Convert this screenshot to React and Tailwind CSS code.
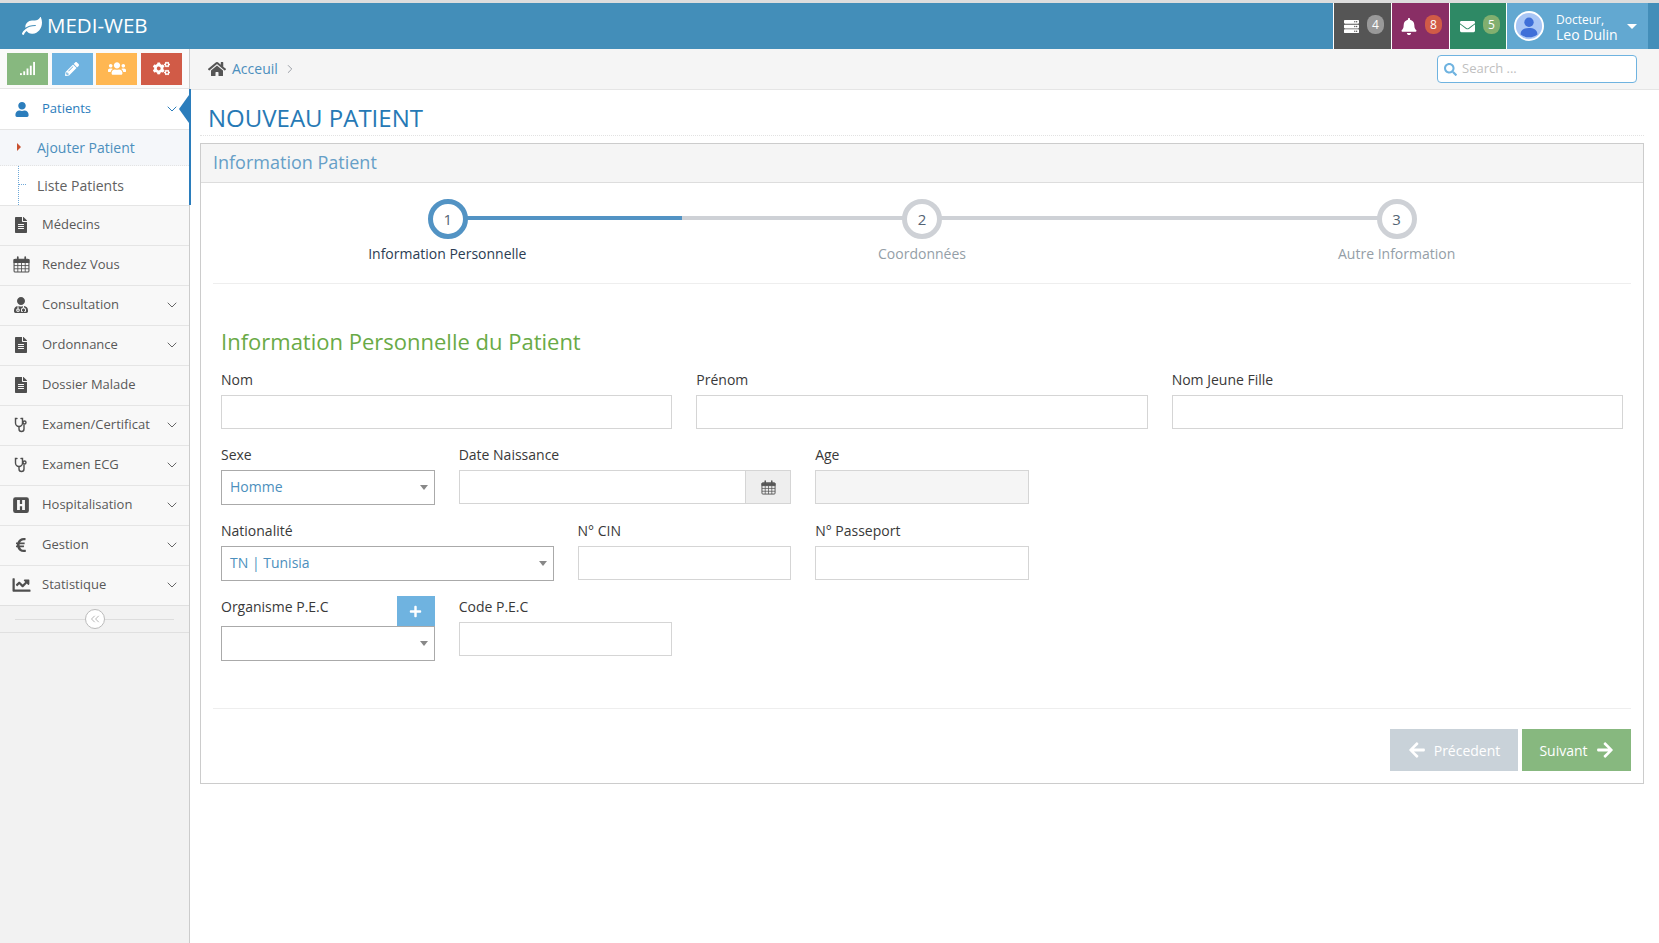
import { ChevronDown, ChevronRight, ChevronsLeft } from "lucide-react"
import {
  FaArrowLeft,
  FaArrowRight,
  FaBell,
  FaChartLine,
  FaCogs,
  FaEnvelope,
  FaEuroSign,
  FaFileAlt,
  FaHome,
  FaLeaf,
  FaPencilAlt,
  FaPlus,
  FaSearch,
  FaServer,
  FaUser,
  FaUserMd,
  FaUsers,
} from "react-icons/fa"

function CalendarIcon({ className }) {
  return (
    <svg viewBox="0 0 16 16" className={className} fill="none" stroke="currentColor">
      <rect x="1" y="3" width="14" height="12" rx="1" strokeWidth="1" />
      <path d="M1 3.5h14V6H1z" fill="currentColor" strokeWidth="1" />
      <path d="M1 9h14M1 12h14M4.5 6v9M8 6v9M11.5 6v9" strokeWidth="0.8" />
      <path d="M4.5 1v3M11.5 1v3" strokeWidth="1.6" strokeLinecap="round" />
    </svg>
  )
}

function HospitalIcon({ className }) {
  return (
    <svg viewBox="0 0 16 16" className={className}>
      <path
        fill="currentColor"
        fillRule="evenodd"
        d="M3 1h10a2 2 0 0 1 2 2v10a2 2 0 0 1-2 2H3a2 2 0 0 1-2-2V3a2 2 0 0 1 2-2zm1.500 2.500v9H7V9h2v3.500h2.500v-9H9V7H7V3.500z"
      />
    </svg>
  )
}

function StethoscopeIcon({ className }) {
  return (
    <svg viewBox="0 0 16 16" className={className} fill="none" stroke="currentColor" strokeWidth="1.4">
      <path d="M4 1.500H2.500V6a3.500 3.500 0 0 0 7 0V1.500H8" strokeLinecap="round" />
      <path d="M6 9.500V12a2.500 2.500 0 0 0 5 0V7.500" />
      <circle cx="11.500" cy="5.500" r="1.500" />
    </svg>
  )
}

function SignalIcon({ className }) {
  return (
    <svg viewBox="0 0 16 16" className={className} fill="currentColor">
      <rect x="0" y="13" width="2" height="2" />
      <rect x="3.500" y="11" width="2" height="4" />
      <rect x="7" y="8" width="2" height="7" />
      <rect x="10.500" y="5" width="2" height="10" />
      <rect x="14" y="1" width="2" height="14" />
    </svg>
  )
}

function Avatar() {
  return (
    <svg viewBox="0 0 32 32" className="w-[30px] h-[30px]">
      <circle cx="16" cy="16" r="15" fill="#a9c6f5" stroke="#ffffff" strokeWidth="2" />
      <circle cx="16" cy="12" r="5" fill="#3f6fd8" />
      <path d="M7 25c0-5 4-7 9-7s9 2 9 7c-2.500 2-5.500 3-9 3s-6.500-1-9-3z" fill="#3f6fd8" />
    </svg>
  )
}

const shortcuts = [
  { Icon: SignalIcon, bg: "bg-[#87b87f]", size: "w-[15px] h-[15px]" },
  { Icon: FaPencilAlt, bg: "bg-[#6fb3e0]", size: "w-[14px] h-[14px]" },
  { Icon: FaUsers, bg: "bg-[#ffb752]", size: "w-[18px] h-[17px]" },
  { Icon: FaCogs, bg: "bg-[#d15b47]", size: "w-[17px] h-[15px]" },
]

const menuItems = [
  { label: "Médecins", Icon: FaFileAlt },
  { label: "Rendez Vous", Icon: CalendarIcon, size: "w-[17px] h-[17px]" },
  { label: "Consultation", Icon: FaUserMd, arrow: true },
  { label: "Ordonnance", Icon: FaFileAlt, arrow: true },
  { label: "Dossier Malade", Icon: FaFileAlt },
  { label: "Examen/Certificat", Icon: StethoscopeIcon, arrow: true },
  { label: "Examen ECG", Icon: StethoscopeIcon, arrow: true },
  { label: "Hospitalisation", Icon: HospitalIcon, arrow: true, size: "w-[18px] h-[18px]" },
  { label: "Gestion", Icon: FaEuroSign, arrow: true },
  { label: "Statistique", Icon: FaChartLine, arrow: true, size: "w-[21px] h-[18px]" },
]

const steps = [
  { n: 1, label: "Information Personnelle", active: true },
  { n: 2, label: "Coordonnées" },
  { n: 3, label: "Autre Information" },
]

function NavBadge({ Icon, bg, badge, count, iconClass, width }) {
  return (
    <div className={`${bg} ${width} h-full border-l border-white flex items-center pl-[9px] relative`}>
      <Icon className={`text-white ${iconClass}`} />
      <span className={`${badge} absolute top-[12px] left-[33px] w-[17px] h-[19px] rounded-[8px] text-white text-[12px] flex items-center justify-center`}>
        {count}
      </span>
    </div>
  )
}

function Sidebar() {
  return (
    <aside className="w-[190px] shrink-0 bg-[#f2f2f2] border-r border-[#cccccc] relative">
      <div className="h-[40px] flex items-center gap-[3.5px] pl-[7px] border-b border-[#e5e5e5] bg-[#fafafa]">
        {shortcuts.map(({ Icon, bg, size }, i) => (
          <div key={i} className={`${bg} w-[41px] h-[32px] flex items-center justify-center text-white`}>
            <Icon className={size} />
          </div>
        ))}
      </div>

      {/* Active group */}
      <div className="relative bg-white">
        <div className="absolute top-0 right-[-2px] w-[2px] h-full bg-[#2b7dbc] z-10" />
        <div className="h-[41px] flex items-center border-b border-[#e5e5e5] text-[#2b7dbc] relative">
          <span className="w-[42px] flex justify-center pl-[1px]">
            <FaUser className="w-[14px] h-[15px]" />
          </span>
          <span className="text-[13px] font-medium">Patients</span>
          <ChevronDown className="w-4 h-4 ml-auto mr-[9px]" strokeWidth={1.5} />
          <span className="absolute right-0 top-[6px] border-y-[14px] border-y-transparent border-r-[10px] border-r-[#2b7dbc]" />
        </div>
        <div className="relative">
          <div className="absolute left-[18px] top-0 bottom-0 border-l border-dotted border-[#6fa8d8]" />
          <div className="h-[36px] flex items-center pl-[37px] bg-[#f5f7fa] border-b border-dotted border-[#e4e4e4] text-[14px] text-[#4c8fbd] relative">
            <span className="absolute left-[17px] top-[13px] border-y-[4px] border-y-transparent border-l-[4px] border-l-[#c8502e]" />
            Ajouter Patient
          </div>
          <div className="h-[39px] flex items-center pl-[37px] pb-[1px] text-[14px] text-[#616161] relative">
            <span className="absolute left-[19px] top-[18px] w-[7px] border-t border-dotted border-[#6fa8d8]" />
            Liste Patients
          </div>
        </div>
      </div>

      {menuItems.map(({ label, Icon, arrow, size }) => (
        <div key={label} className="h-[40px] flex items-center pb-[2px] bg-[#f8f8f8] border-t border-[#e5e5e5] text-[#585858]">
          <span className="w-[42px] flex justify-center text-[#4f4f4f]">
            <Icon className={size || "w-[16px] h-[16px]"} />
          </span>
          <span className="text-[13px]">{label}</span>
          {arrow && <ChevronDown className="w-4 h-4 ml-auto mr-[9px] text-[#666666]" strokeWidth={1.5} />}
        </div>
      ))}

      <div className="h-[28px] flex items-center justify-center border-y border-[#e0e0e0] relative">
        <div className="absolute left-[15px] right-[15px] top-[13px] border-t border-[#dddddd]" />
        <span className="relative w-[20px] h-[20px] rounded-full border border-[#bbbbbb] bg-white flex items-center justify-center text-[#999999]">
          <ChevronsLeft className="w-[14px] h-[14px]" strokeWidth={1.25} />
        </span>
      </div>
    </aside>
  )
}

function Field({ label, span, children }) {
  return (
    <div className={span}>
      <label className="block text-[14px] leading-[19px] text-[#393939] mb-[6px]">{label}</label>
      {children}
    </div>
  )
}

function TextInput({ disabled }) {
  return (
    <input
      disabled={disabled}
      className={`w-full h-[34px] border border-[#d5d5d5] outline-none ${disabled ? "bg-[#f5f5f5]" : "bg-white"}`}
    />
  )
}

function SelectBox({ value }) {
  return (
    <div className="h-[35px] border border-[#aaaaaa] bg-white flex items-center pl-[8px] pr-[6px] text-[14px] text-[#4c8fbd]">
      <span className="pb-[3px]">{value}</span>
      <span className="ml-auto border-x-[4px] border-x-transparent border-t-[5px] border-t-[#888888]" />
    </div>
  )
}

function Stepper() {
  return (
    <div className="pt-[16px] pb-[20px] border-b border-[#eeeeee]">
      <div className="grid grid-cols-3 -mx-[3px]">
        {steps.map((step, i) => (
          <div key={step.n} className="relative flex flex-col items-center">
            {i < 2 && (
              <div className="absolute left-1/2 top-[17px] w-full h-[4px] bg-[#ced1d6] flex">
                {step.active && <div className="w-[49.500%] h-full bg-[#5293c4]" />}
              </div>
            )}
            <div
              className={`relative w-[40px] h-[40px] rounded-full bg-white flex items-center justify-center text-[15px] text-[#546474] ${
                step.active ? "border-[5px] border-[#5293c4] ml-[1px]" : "border-[5px] border-[#ced1d6]"
              }`}
            >
              {step.n}
            </div>
            <div className={`mt-[5px] text-[14px] leading-[19px] ${step.active ? "text-[#2b3d53]" : "text-[#949ea7]"}`}>
              {step.label}
            </div>
          </div>
        ))}
      </div>
    </div>
  )
}

export default function App() {
  return (
    <div className="min-h-screen flex flex-col bg-white text-[#393939] font-['Open_Sans','Noto_Sans',sans-serif]">
      {/* Navbar */}
      <div className="h-[3px] bg-[#dddddd]" />
      <header className="h-[46px] bg-[#438eb9] flex items-center pr-[11px]">
        <div className="flex items-center pl-[22px] pb-[1px] text-white text-[20.500px]">
          <FaLeaf className="w-[20px] h-[18px] mr-[5px]" />
          MEDI-WEB
        </div>
        <div className="ml-auto h-full flex">
          <NavBadge Icon={FaServer} bg="bg-[#555555]" badge="bg-[#999999]" count="4" iconClass="w-[17px] h-[15px]" width="w-[58px]" />
          <NavBadge Icon={FaBell} bg="bg-[#892e65]" badge="bg-[#d15b47]" count="8" iconClass="w-[16px] h-[17px]" width="w-[58px]" />
          <NavBadge Icon={FaEnvelope} bg="bg-[#2e8965]" badge="bg-[#82af6f]" count="5" iconClass="w-[17px] h-[15px]" width="w-[57px]" />
          <div className="w-[142px] h-full bg-[#62a8d1] border-l border-white flex items-center pl-[7px] text-white">
            <Avatar />
            <div className="ml-[12px] pt-[2px] flex flex-col">
              <span className="text-[12px] leading-[15px]">Docteur,</span>
              <span className="text-[14px] leading-[15px]">Leo Dulin</span>
            </div>
            <span className="ml-[9px] border-x-[5px] border-x-transparent border-t-[5px] border-t-white" />
          </div>
        </div>
      </header>

      <div className="flex flex-1">
        <Sidebar />

        <main className="flex-1 min-w-0">
          {/* Breadcrumb */}
          <div className="h-[41px] bg-[#f5f5f5] border-b border-[#e5e5e5] flex items-center pl-[18px] pr-[22px]">
            <FaHome className="w-[18px] h-[16px] text-[#555555]" />
            <span className="ml-[6px] pb-[2px] text-[14px] text-[#4c8fbd]">Acceuil</span>
            <ChevronRight className="w-[14px] h-[14px] ml-[5px] text-[#8f949c]" strokeWidth={1.5} />
            <div className="ml-auto w-[200px] h-[28px] border border-[#6fb3e0] rounded-[4px] bg-white flex items-center pl-[6px]">
              <FaSearch className="w-[13px] h-[13px] text-[#6fb3e0] shrink-0" />
              <input
                placeholder="Search ..."
                className="ml-[5px] w-full min-w-0 text-[13px] outline-none placeholder:text-[#c0c0c0]"
              />
            </div>
          </div>

          <div className="pl-[10px] pr-[15px]">
            {/* Page title */}
            <div className="h-[46px] border-b border-dotted border-[#e2e2e2] flex items-end pb-[1px] pl-[8px]">
              <h1 className="text-[24px] leading-[33px] text-[#2679b5]">NOUVEAU PATIENT</h1>
            </div>

            {/* Panel */}
            <section className="mt-[7px] border border-[#cccccc]">
              <div className="h-[39px] bg-[#f5f5f5] border-b border-[#dddddd] flex items-center pl-[12px] pb-[2px] text-[18px] text-[#669fc7]">
                Information Patient
              </div>

              <div className="px-[12px] pb-[12px]">
                <Stepper />

                <div className="px-[8px] pt-[42px]">
                  <h3 className="text-[22px] leading-[30px] text-[#69aa46]">Information Personnelle du Patient</h3>

                  <div className="mt-[14px] grid grid-cols-12 gap-x-6 gap-y-[16px]">
                    <Field label="Nom" span="col-span-4"><TextInput /></Field>
                    <Field label="Prénom" span="col-span-4"><TextInput /></Field>
                    <Field label="Nom Jeune Fille" span="col-span-4"><TextInput /></Field>

                    <Field label="Sexe" span="col-span-2"><SelectBox value="Homme" /></Field>
                    <Field label="Date Naissance" span="col-span-3">
                      <div className="flex h-[34px] border border-[#d5d5d5]">
                        <input className="flex-1 min-w-0 outline-none bg-white" />
                        <span className="w-[45px] bg-[#eeeeee] border-l border-[#d5d5d5] flex items-center justify-center text-[#555555]">
                          <CalendarIcon className="w-[15px] h-[15px]" />
                        </span>
                      </div>
                    </Field>
                    <Field label="Age" span="col-span-2"><TextInput disabled /></Field>
                    <div className="col-span-5" />

                    <Field label="Nationalité" span="col-span-3"><SelectBox value="TN | Tunisia" /></Field>
                    <Field label="N° CIN" span="col-span-2"><TextInput /></Field>
                    <Field label="N° Passeport" span="col-span-2"><TextInput /></Field>
                    <div className="col-span-5" />

                    <div className="col-span-2 -mt-[1px]">
                      <div className="h-[30px] flex items-start justify-between">
                        <label className="text-[14px] leading-[19px] text-[#393939] mt-[1px]">Organisme P.E.C</label>
                        <button className="w-[38px] h-[30px] bg-[#6fb3e0] flex items-center justify-center text-white">
                          <FaPlus className="w-[13px] h-[13px]" />
                        </button>
                      </div>
                      <SelectBox value="" />
                    </div>
                    <Field label="Code P.E.C" span="col-span-2"><TextInput /></Field>
                  </div>
                </div>

                <div className="mt-[47px] border-t border-[#eeeeee] pt-[20px] flex justify-end gap-[4px]">
                  <button className="w-[128px] h-[42px] bg-[#c9d2d9] text-white text-[14px] font-medium flex items-center justify-center gap-[8px]">
                    <FaArrowLeft className="w-[18px] h-[18px]" />
                    Précedent
                  </button>
                  <button className="w-[109px] h-[42px] bg-[#87b87f] text-white text-[14px] font-medium flex items-center justify-center gap-[8px]">
                    Suivant
                    <FaArrowRight className="w-[18px] h-[18px]" />
                  </button>
                </div>
              </div>
            </section>
          </div>
        </main>
      </div>
    </div>
  )
}
